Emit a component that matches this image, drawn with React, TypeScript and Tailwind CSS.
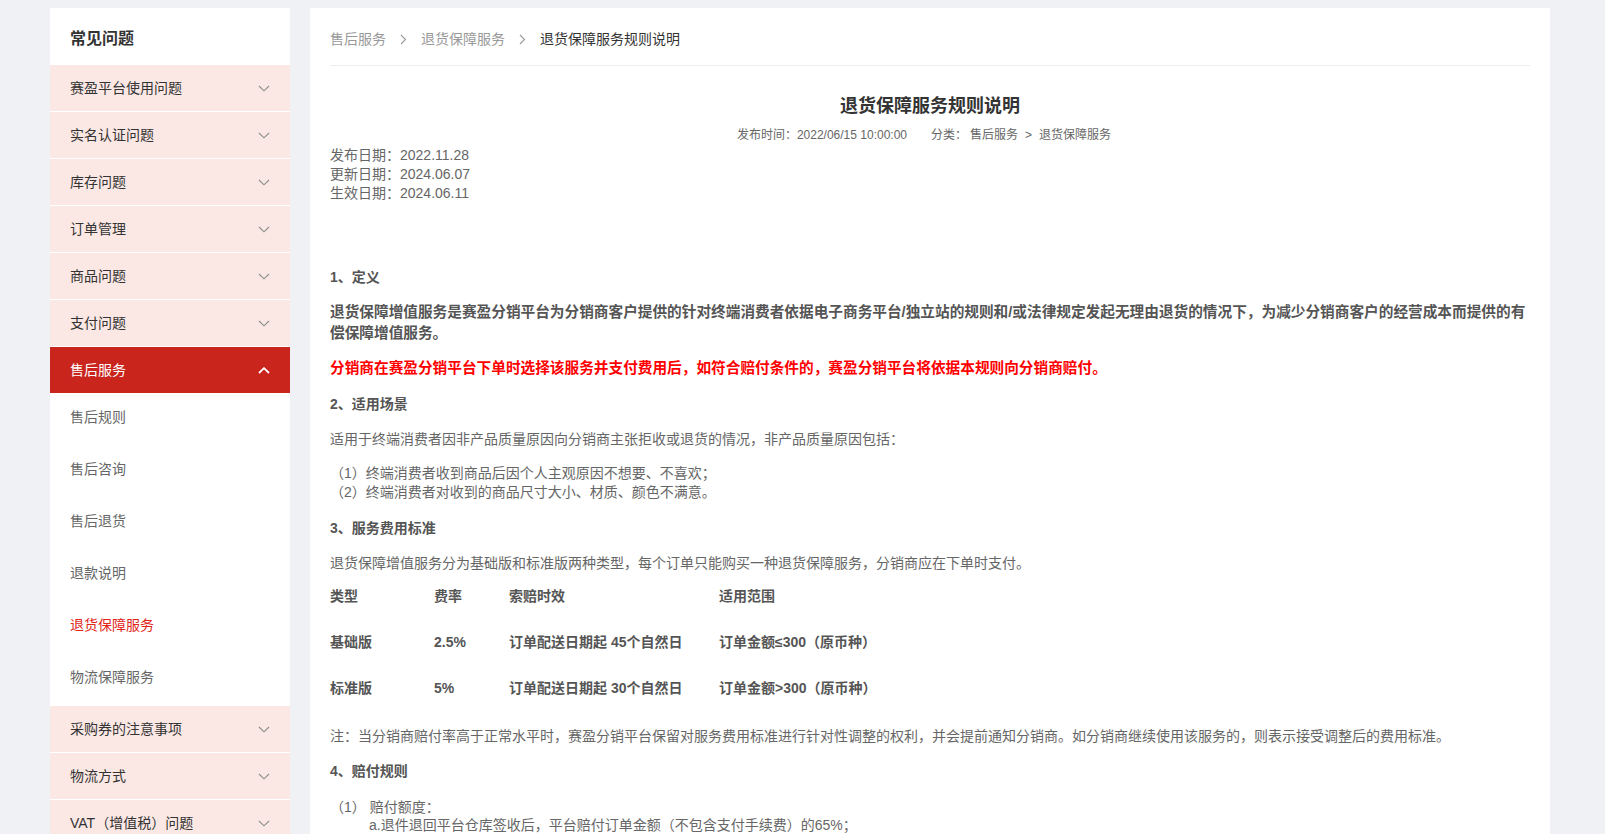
import React from "react";

const topGroups = ["赛盈平台使用问题", "实名认证问题", "库存问题", "订单管理", "商品问题", "支付问题"];
const afterSaleLinks = ["售后规则", "售后咨询", "售后退货", "退款说明", "退货保障服务", "物流保障服务"];
const bottomGroups = ["采购券的注意事项", "物流方式", "VAT（增值税）问题"];

const feeRows = [
  { type: "基础版", rate: "2.5%", period: "订单配送日期起 45个自然日", scope: "订单金额≤300（原币种）" },
  { type: "标准版", rate: "5%", period: "订单配送日期起 30个自然日", scope: "订单金额>300（原币种）" },
];

const Chevron = ({ up = false }: { up?: boolean }) => (
  <svg width="12" height="7" viewBox="0 0 12 7" fill="none" className="shrink-0">
    {up ? (
      <polyline points="1,6 6,1.2 11,6" stroke="#ffffff" strokeWidth="1.8" />
    ) : (
      <polyline points="1,1 6,5.8 11,1" stroke="#8c8c8c" strokeWidth="1.1" />
    )}
  </svg>
);

const CrumbArrow = () => (
  <svg width="7" height="11" viewBox="0 0 7 11" fill="none" className="mx-[14px] shrink-0">
    <polyline points="1,1 5.5,5.5 1,10" stroke="#9a9a9a" strokeWidth="1.1" />
  </svg>
);

const GroupRow = ({ label }: { label: string }) => (
  <div className="h-[46px] box-content border-b border-white bg-[#fbe8e5] flex items-center justify-between pl-[20px] pr-[20px] text-[14px] text-[#333]">
    <span>{label}</span>
    <Chevron />
  </div>
);

function Sidebar() {
  return (
    <aside className="w-[240px] shrink-0 bg-white self-start">
      <div className="h-[57px] flex items-center pl-[20px] pt-[4px] text-[16px] font-bold text-[#333]">
        常见问题
      </div>
      {topGroups.map((g) => (
        <GroupRow key={g} label={g} />
      ))}
      <div className="h-[46px] bg-[#c9251d] flex items-center justify-between px-[20px] text-[14px] text-white">
        <span>售后服务</span>
        <Chevron up />
      </div>
      <ul className="pb-px">
        {afterSaleLinks.map((s) => (
          <li
            key={s}
            className={`h-[52px] flex items-center pl-[20px] pb-[4px] text-[14px] ${
              s === "退货保障服务" ? "text-[#e1251b]" : "text-[#666]"
            }`}
          >
            {s}
          </li>
        ))}
      </ul>
      {bottomGroups.map((g) => (
        <GroupRow key={g} label={g} />
      ))}
    </aside>
  );
}

function Article() {
  return (
    <main className="w-[1240px] shrink-0 bg-white px-[20px] pb-[60px]">
      <nav className="h-[58px] pt-[20px] pb-[15px] border-b border-[#eeeeee] flex items-center text-[14px] leading-[22px]">
        <span className="text-[#999]">售后服务</span>
        <CrumbArrow />
        <span className="text-[#999]">退货保障服务</span>
        <CrumbArrow />
        <span className="text-[#333]">退货保障服务规则说明</span>
      </nav>

      <h1 className="mt-[27px] text-center text-[18px] leading-[26px] font-bold text-[#333]">退货保障服务规则说明</h1>
      <div className="mt-[7px] pr-[12px] flex justify-center text-[12px] leading-[18px] text-[#666]">
        <span>发布时间：2022/06/15 10:00:00</span>
        <span className="ml-[24px]">分类：</span>
        <span className="ml-[3px]">售后服务</span>
        <span className="mx-[7px]">&gt;</span>
        <span>退货保障服务</span>
      </div>

      <div className="mt-[2px] text-[14px] leading-[19px] text-[#666]">
        <p>发布日期：2022.11.28</p>
        <p>更新日期：2024.06.07</p>
        <p>生效日期：2024.06.11</p>
      </div>

      <section className="text-[14px] text-[#666]">
        <h3 className="mt-[64px] leading-[20px] font-bold text-[#555]">1、定义</h3>
        <p className="mt-[15px] text-[14.667px] leading-[21px] font-bold text-[#555]">
          退货保障增值服务是赛盈分销平台为分销商客户提供的针对终端消费者依据电子商务平台/独立站的规则和/或法律规定发起无理由退货的情况下，为减少分销商客户的经营成本而提供的有偿保障增值服务。
        </p>
        <p className="mt-[14px] text-[14.667px] leading-[21px] font-bold text-[#ff0000]">
          分销商在赛盈分销平台下单时选择该服务并支付费用后，如符合赔付条件的，赛盈分销平台将依据本规则向分销商赔付。
        </p>

        <h3 className="mt-[15px] leading-[20px] font-bold text-[#555]">2、适用场景</h3>
        <p className="mt-[15px] leading-[20px]">适用于终端消费者因非产品质量原因向分销商主张拒收或退货的情况，非产品质量原因包括：</p>
        <div className="mt-[15px] leading-[19px]">
          <p>（1）终端消费者收到商品后因个人主观原因不想要、不喜欢；</p>
          <p>（2）终端消费者对收到的商品尺寸大小、材质、颜色不满意。</p>
        </div>

        <h3 className="mt-[16px] leading-[20px] font-bold text-[#555]">3、服务费用标准</h3>
        <p className="mt-[15px] leading-[20px]">退货保障增值服务分为基础版和标准版两种类型，每个订单只能购买一种退货保障服务，分销商应在下单时支付。</p>

        <div className="font-bold text-[#555]">
          <div className="grid grid-cols-[104px_75px_210px_1fr] h-[46px] items-center">
            <span>类型</span>
            <span>费率</span>
            <span>索赔时效</span>
            <span>适用范围</span>
          </div>
          {feeRows.map((r) => (
            <div key={r.type} className="grid grid-cols-[104px_75px_210px_1fr] h-[46px] items-center">
              <span>{r.type}</span>
              <span>{r.rate}</span>
              <span>{r.period}</span>
              <span>{r.scope}</span>
            </div>
          ))}
        </div>

        <p className="mt-[15px] leading-[20px]">
          注：当分销商赔付率高于正常水平时，赛盈分销平台保留对服务费用标准进行针对性调整的权利，并会提前通知分销商。如分销商继续使用该服务的，则表示接受调整后的费用标准。
        </p>

        <h3 className="mt-[15px] leading-[20px] font-bold text-[#555]">4、赔付规则</h3>
        <div className="mt-[17px] leading-[18px]">
          <p>（1） 赔付额度：</p>
          <p className="pl-[39px]">a.退件退回平台仓库签收后，平台赔付订单金额（不包含支付手续费）的65%；</p>
        </div>
      </section>
    </main>
  );
}

export default function App() {
  return (
    <div className="min-h-screen bg-[#f0f1f5] font-['Liberation_Sans','Noto_Sans_CJK_SC',sans-serif]">
      <div className="flex gap-[20px] pl-[50px] pt-[8px]">
        <Sidebar />
        <Article />
      </div>
    </div>
  );
}
